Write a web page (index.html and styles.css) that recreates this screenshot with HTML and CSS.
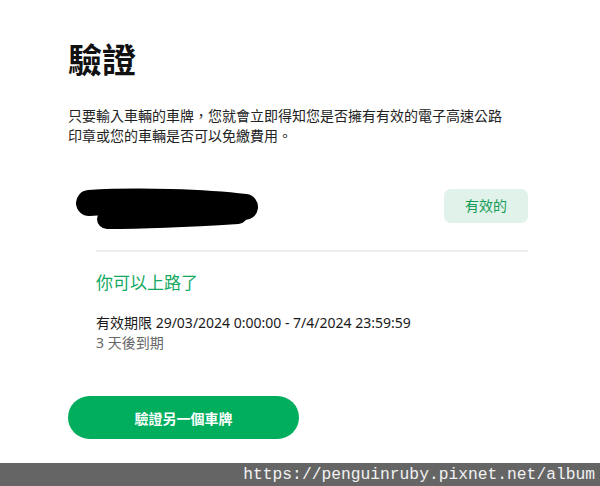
FILE: index.html
```html
<!DOCTYPE html>
<html lang="zh-Hant">
<head>
  <meta charset="UTF-8" />
  <meta name="viewport" content="width=device-width, initial-scale=1.0"/>
  <title>驗證</title>
  <link rel="stylesheet" href="styles.css">
</head>
<body>

  <main class="page">
    <h1>驗證</h1>
    <p class="intro">只要輸入車輛的車牌，您就會立即得知您是否擁有有效的電子高速公路印章或您的車輛是否可以免繳費用。</p>

    <div class="plate-row">
      <svg class="plate" width="186" height="44" viewBox="0 0 186 44">
        <path d="M13 15 C 60 12, 130 14, 169 19" stroke="#000" stroke-width="26" stroke-linecap="round" fill="none"/>
        <path d="M31 31 C 80 31, 130 28, 162 26" stroke="#000" stroke-width="20" stroke-linecap="round" fill="none"/>
      </svg>
      <span class="badge">有效的</span>
    </div>

    <div class="result">
      <div class="result-title">你可以上路了</div>
      <div class="period">有效期限 29/03/2024 0:00:00 - 7/4/2024 23:59:59</div>
      <div class="expires">3 天後到期</div>
    </div>

    <button class="again">驗證另一個車牌</button>
  </main>

  <footer class="watermark">https://penguinruby.pixnet.net/album</footer>

</body>
</html>
```

FILE: styles.css
```css
body {
  margin: 0;
  font-family: "Noto Sans", "Noto Sans CJK TC", sans-serif;
  background: #fff;
  color: #111;
  min-height: 486px;
  display: flex;
  flex-direction: column;
}
.page {
  padding: 0 72px 0 68px;
  flex: 1;
}
h1 {
  margin: 36px 0 0;
  font-size: 34px;
  line-height: 48px;
  font-weight: 700;
}
.intro {
  margin: 22px 0 0;
  max-width: 440px;
  font-size: 14px;
  line-height: 20px;
  color: #222;
}
.plate-row {
  display: flex;
  justify-content: space-between;
  align-items: flex-start;
  margin-top: 42px;
  padding-left: 8px;
}
.plate {
  display: block;
}
.badge {
  margin-top: 1px;
  background: #e0f2ea;
  color: #139a55;
  font-size: 14px;
  line-height: 34px;
  padding: 0 21px;
  border-radius: 7px;
}
.result {
  margin: 18px 0 0 28px;
  border-top: 2px solid #ececec;
  padding-top: 18px;
}
.result-title {
  color: #13a861;
  font-size: 17px;
  line-height: 26px;
}
.period {
  margin-top: 17px;
  font-size: 14px;
  line-height: 20px;
  color: #1a1a1a;
}
.expires {
  font-size: 14px;
  line-height: 20px;
  color: #666;
}
.again {
  display: block;
  margin-top: 43px;
  width: 231px;
  height: 43px;
  border: none;
  border-radius: 22px;
  background: #00ae5e;
  color: #fff;
  font-family: inherit;
  font-size: 14px;
  font-weight: 700;
}
.watermark {
  margin-top: 23px;
  height: 23px;
  line-height: 23px;
  background: #656565;
  color: #f2f2f2;
  font-family: "Liberation Mono", monospace;
  font-size: 16.3px;
  text-align: right;
  padding-right: 5px;
}
```
